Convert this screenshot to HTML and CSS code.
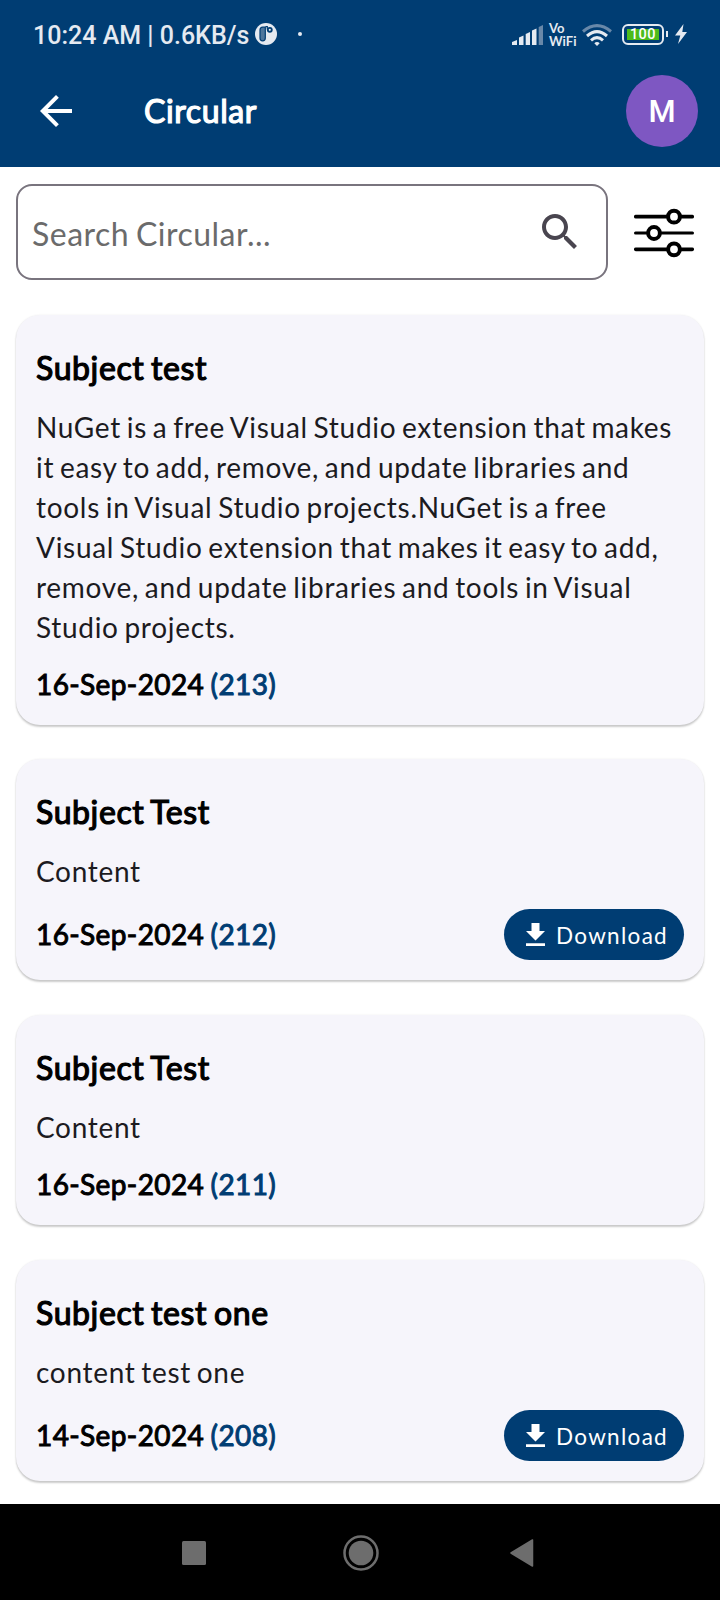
FILE: index.html
```html
<!DOCTYPE html>
<html lang="en">
<head>
<meta charset="utf-8">
<title>Circular</title>
<link rel="stylesheet" href="styles.css">
</head>
<body>
<header class="header">
  <div class="status">
    <span class="clock">10:24 AM | 0.6KB/s</span>
    <svg class="app-badge" width="22" height="22" viewBox="0 0 22 22"><circle cx="11" cy="11" r="11" fill="#e5eaf1"/><path d="M5 7Q5 4.200 7.800 4.200H10.300V15Q10.300 17.800 7.600 17.800Q5 17.800 5 15Z" fill="#4d769c" stroke="#003d73" stroke-width="1.200"/><circle cx="14.800" cy="6.800" r="2.900" fill="#003d73"/><circle cx="14.800" cy="6.800" r="1.100" fill="#e5eaf1"/><path d="M10.500 3.600H12.300V6.500" fill="none" stroke="#003d73" stroke-width="1.200"/></svg>
    <span class="dot"></span>
    <svg class="signal" width="31" height="20" viewBox="0 0 31 20"><g fill="#e5eaf1"><path d="M0 20V17L5 15V20Z"/><path d="M7 20V12.500L11.500 10.500V20Z"/><path d="M13.700 20V9L18 7V20Z"/><path d="M20 20V5.500L24.500 3.500V20Z"/></g><path d="M26.700 20V2L31 0V20Z" fill="#6888a9"/></svg>
    <span class="vowifi"><span>Vo</span><span>WiFi</span></span>
    <svg class="wifi" width="30" height="22" viewBox="0 0 30 22" fill="none" stroke="#e5eaf1" stroke-width="3"><path d="M1 7.500Q15-4.300 29 7.500" stroke="#6888a9"/><path d="M5 12Q15 3.300 25 12"/><path d="M9 16.300Q15 11 21 16.300"/><path d="M15 22L12.300 19.200Q15 16.800 17.700 19.200Z" fill="#e5eaf1" stroke="none"/></svg>
    <span class="battery"><span class="charge">100</span></span>
    <span class="battery-tip"></span>
    <svg class="bolt" width="12" height="20" viewBox="0 0 12 20"><path d="M8.500 0L0 11.500H5.300L3 20L12 8H7.300Z" fill="#e5eaf1"/></svg>
  </div>
  <div class="appbar">
    <svg class="back" width="32" height="32" viewBox="0 0 32 32"><path d="M32 14V18H7.660L18.840 29.180L16 32L0 16L16 0L18.820 2.820L7.660 14Z" fill="#fff"/></svg>
    <h1 class="heading">Circular</h1>
    <span class="avatar">M</span>
  </div>
</header>
<main class="content">
  <div class="search-row">
    <div class="search">
      <span class="placeholder">Search Circular...</span>
      <svg width="48" height="48" viewBox="0 0 24 24"><path fill="#49454f" d="M15.500 14h-.79l-.28-.27C15.410 12.590 16 11.110 16 9.500 16 5.910 13.090 3 9.500 3S3 5.910 3 9.500 5.910 16 9.500 16c1.610 0 3.090-.59 4.230-1.570l.27.28v.79l5 4.990L20.490 19l-4.990-5zm-6 0C7.010 14 5 11.990 5 9.500S7.010 5 9.500 5 14 7.010 14 9.500 11.990 14 9.500 14z"/></svg>
    </div>
    <svg class="filter" width="60" height="50" viewBox="0 0 60 50" stroke="#000" stroke-width="3.700" stroke-linecap="round"><path d="M1.800 8.700H58.200M1.800 41.300H58.200"/><path d="M1.500 25H58.500" stroke-width="3"/><g fill="#fff" stroke-width="4"><circle cx="40" cy="8.700" r="5.900"/><circle cx="20" cy="25" r="5.900"/><circle cx="40" cy="41.300" r="5.900"/></g></svg>
  </div>
  <section class="list">
    <article class="card">
      <h2 class="subject">Subject test</h2>
      <p class="body">NuGet is a free Visual Studio extension that makes it easy to add, remove, and update libraries and tools in Visual Studio projects.NuGet is a free Visual Studio extension that makes it easy to add, remove, and update libraries and tools in Visual Studio projects.</p>
      <div class="meta"><span class="date">16-Sep-2024 <span class="number">(213)</span></span></div>
    </article>
    <article class="card">
      <h2 class="subject">Subject Test</h2>
      <p class="body">Content</p>
      <div class="meta with-file"><span class="date">16-Sep-2024 <span class="number">(212)</span></span>
        <span class="download"><svg width="19" height="23" viewBox="0 0 19 23" fill="#fff"><path d="M5.500 0H13.500V8H19L9.500 17.500L0 8H5.500ZM0 20.200H19V23H0Z"/></svg><span class="label">Download</span></span></div>
    </article>
    <article class="card">
      <h2 class="subject">Subject Test</h2>
      <p class="body">Content</p>
      <div class="meta"><span class="date">16-Sep-2024 <span class="number">(211)</span></span></div>
    </article>
    <article class="card">
      <h2 class="subject">Subject test one</h2>
      <p class="body">content test one</p>
      <div class="meta with-file"><span class="date">14-Sep-2024 <span class="number">(208)</span></span>
        <span class="download"><svg width="19" height="23" viewBox="0 0 19 23" fill="#fff"><path d="M5.500 0H13.500V8H19L9.500 17.500L0 8H5.500ZM0 20.200H19V23H0Z"/></svg><span class="label">Download</span></span></div>
    </article>
  </section>
</main>
<nav class="navbar">
  <svg width="24" height="24" viewBox="0 0 24 24"><rect width="24" height="24" rx="1.500" fill="#6d6d6d"/></svg>
  <svg class="home" width="36" height="36" viewBox="0 0 36 36"><circle cx="18" cy="18" r="16.500" fill="none" stroke="#6d6d6d" stroke-width="2.500"/><circle cx="18" cy="18" r="12.300" fill="#6d6d6d"/></svg>
  <svg width="24" height="28" viewBox="0 0 24 28"><path d="M22.500 1V27L1 14Z" fill="#6d6d6d" stroke="#6d6d6d" stroke-width="1.500" stroke-linejoin="round"/></svg>
</nav>
</body>
</html>
```

FILE: styles.css
```css
* { box-sizing: border-box; }
body {
  margin: 0;
  width: 720px;
  height: 1600px;
  display: flex;
  flex-direction: column;
  background: #fff;
  font-family: Lato, sans-serif;
  overflow: hidden;
}
h1, h2, p { margin: 0; font-weight: 400; }
svg { display: block; flex: none; }

.header { height: 167px; flex: none; background: #003d73; }
.status {
  height: 56px;
  padding: 12px 33px 0 33px;
  display: flex;
  align-items: center;
  color: #e5eaf1;
}
.clock {
  width: 222px;
  padding-top: 4px;
  font: 500 25px/30px Roboto, sans-serif;
  white-space: nowrap;
}
.dot { width: 4px; height: 4px; margin-left: 21px; border-radius: 2px; background: #e5eaf1; }
.signal { margin-left: auto; margin-top: 2px; }
.vowifi {
  width: 27px;
  margin-left: 6px;
  padding-top: 2px;
  display: flex;
  flex-direction: column;
  font: 700 13px/13.500px Lato, sans-serif;
}
.wifi { margin-left: 6px; margin-top: 2px; }
.battery {
  width: 42px;
  height: 21px;
  margin-left: 10px;
  padding: 3px;
  border: 2px solid #e5eaf1;
  border-radius: 6px;
}
.charge {
  display: block;
  width: 32px;
  height: 11px;
  background: #4dbb1b;
  color: #fff;
  font: 500 14.500px/11px Roboto, sans-serif;
  letter-spacing: .5px;
  text-align: center;
}
.battery-tip { width: 2px; height: 6px; margin: 0 7px 0 2px; background: #e5eaf1; }

.appbar { height: 111px; padding: 0 22px 2px 40px; display: flex; align-items: center; }
.heading {
  margin-left: 72px;
  color: #fff;
  font-size: 32px;
  line-height: 40px;
  letter-spacing: .6px;
  -webkit-text-stroke: 1.2px #fff;
}
.avatar {
  width: 72px;
  height: 72px;
  margin-left: auto;
  border-radius: 50%;
  background: #7e57c2;
  color: #fff;
  font: 500 31px/74px Roboto, sans-serif;
  text-align: center;
}

.content { flex: 1; padding: 17px 16px 0; }
.search-row { display: flex; align-items: center; gap: 26px; }
.search {
  width: 592px;
  height: 96px;
  padding: 0 22px 0 14px;
  display: flex;
  align-items: center;
  justify-content: space-between;
  border: 2px solid #79747e;
  border-radius: 16px;
}
.search svg { margin-bottom: 1px; }
.placeholder { color: #6b6b6b; font-size: 32px; line-height: 40px; letter-spacing: .5px; word-spacing: -2px; padding-top: 4px; }
.filter { margin-top: 1px; }
.list { margin-top: 35px; display: flex; flex-direction: column; gap: 35px; }
.card {
  padding: 29px 20px 21px;
  border-radius: 24px;
  background: #f6f5fb;
  box-shadow: 0 2px 2px rgba(0, 0, 0, .2), 0 0 2px rgba(0, 0, 0, .08);
}
.card:first-child { margin-bottom: -1px; }
.subject { color: #000; font-size: 32px; line-height: 48px; letter-spacing: .6px; word-spacing: -2px; -webkit-text-stroke: 1.200px #000; }
.body { margin-top: 15px; color: #1c1b1f; font-size: 28px; line-height: 40px; letter-spacing: .7px; word-spacing: -2.100px; }
.meta { margin-top: 17px; display: flex; align-items: center; justify-content: space-between; }
.with-file { margin: 18px 0 -1px; }
.with-file .date { padding-bottom: 2px; }
.date { color: #000; font-size: 28px; line-height: 40px; letter-spacing: .4px; word-spacing: -1.300px; -webkit-text-stroke: 1px currentColor; }
.number { color: #003d73; }
.download {
  width: 180px;
  height: 51px;
  padding-left: 22px;
  display: flex;
  align-items: center;
  gap: 11px;
  border-radius: 26px;
  background: #003d73;
  color: #fff;
  font-size: 22.500px;
  letter-spacing: 1.300px;
}
.label { padding-top: 2px; }

.navbar {
  height: 96px;
  flex: none;
  padding: 1px 186px 0 182px;
  display: flex;
  align-items: center;
  justify-content: space-between;
  background: #000;
}
.home { margin-left: 5px; }
```
